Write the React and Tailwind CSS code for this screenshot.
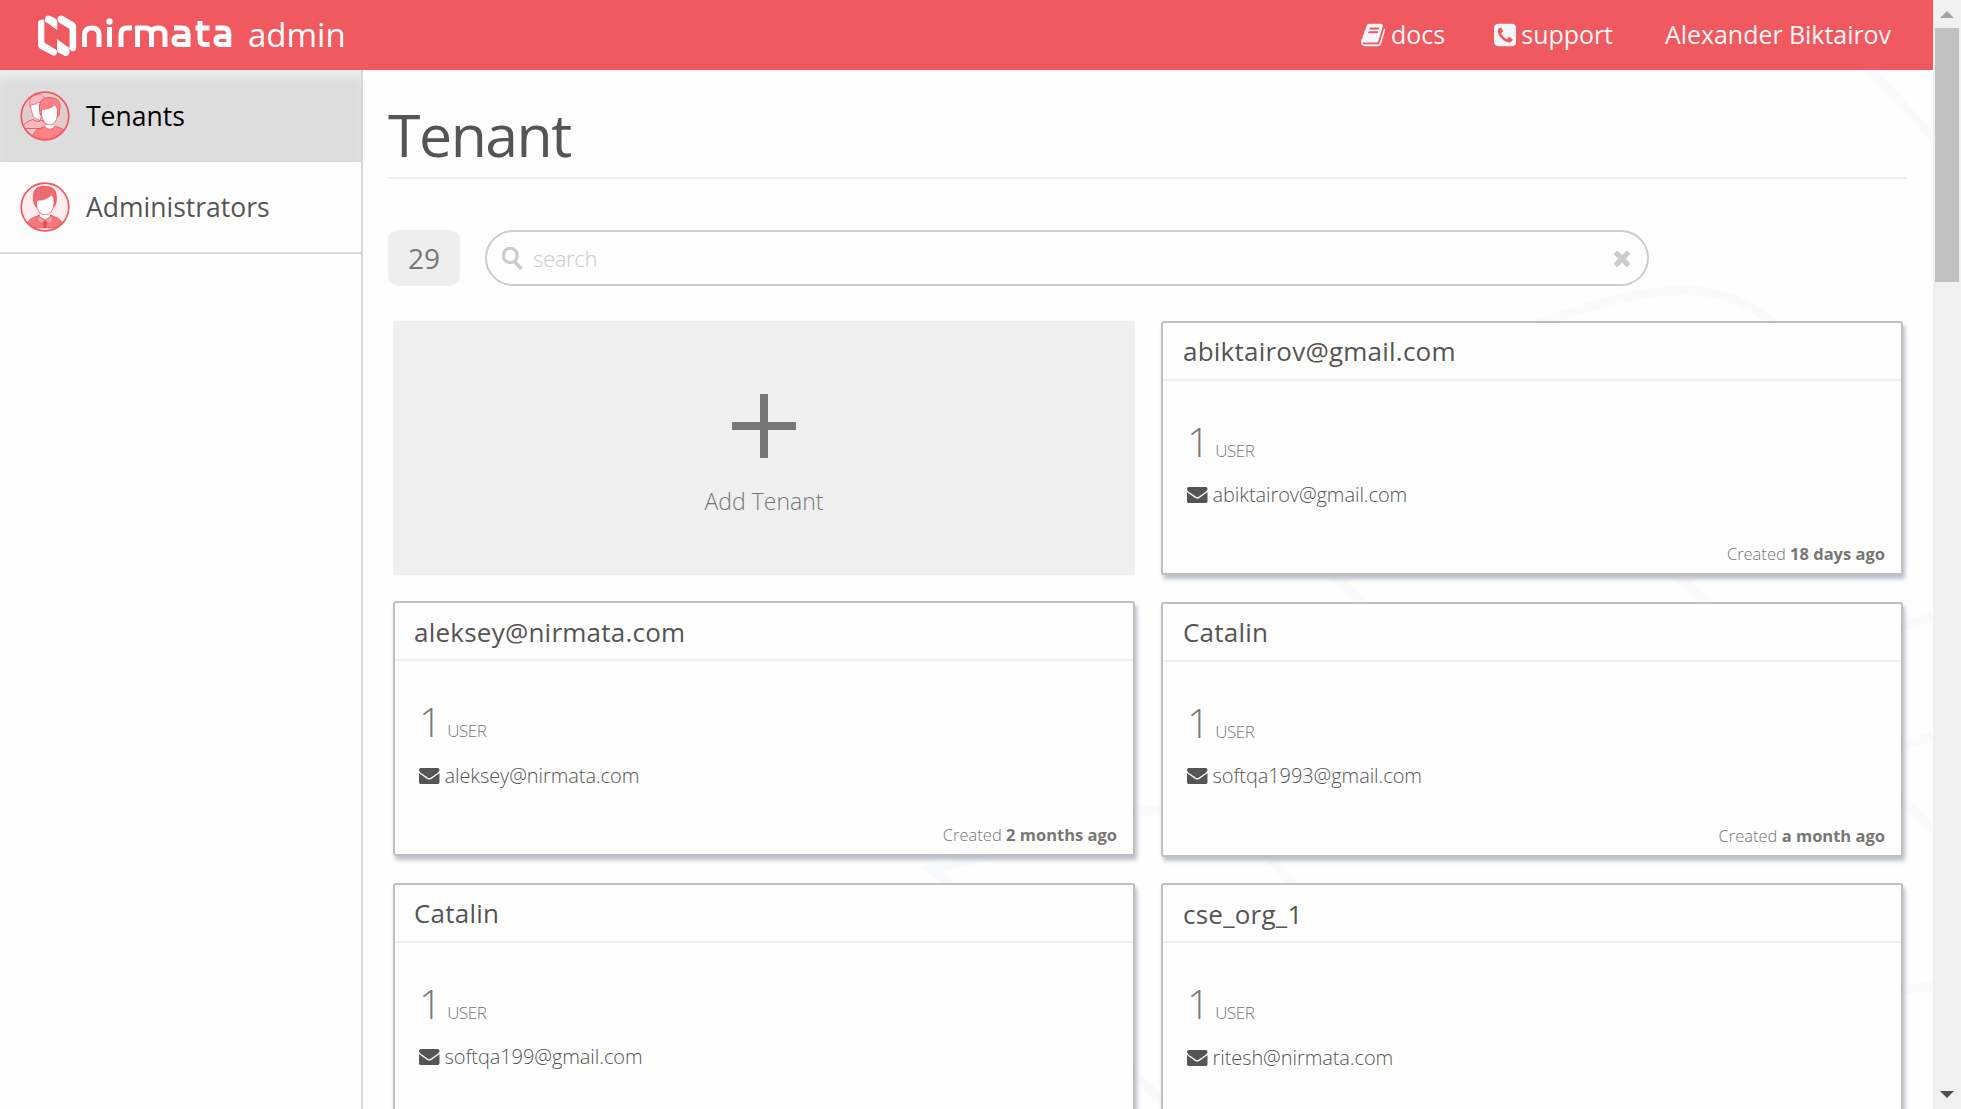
import React from "react";

const cards = [
  { name: "abiktairov@gmail.com", mail: "abiktairov@gmail.com", ago: "18 days ago", frame: "h-[254px]", titlePad: "pl-5 pt-0", mailPad: "pb-[2px]" },
  { name: "aleksey@nirmata.com", mail: "aleksey@nirmata.com", ago: "2 months ago", frame: "-mt-px h-[255px]", titlePad: "pl-[19px] pt-[2px]", mailPad: "pb-0" },
  { name: "Catalin", mail: "softqa1993@gmail.com", ago: "a month ago", frame: "h-[255px]", titlePad: "pl-5 pt-0", mailPad: "pb-[2px]" },
  { name: "Catalin", mail: "softqa199@gmail.com", frame: "-mt-px h-[254px]", titlePad: "pl-[19px] pt-0", mailPad: "pb-[2px]" },
  { name: "cse_org_1", mail: "ritesh@nirmata.com", frame: "-mt-px h-[254px]", titlePad: "pl-5 pt-[2px]", mailPad: "pb-0" },
];

function BookIcon() {
  return (
    <svg width="26" height="26" viewBox="0 0 1792 1792" fill="currentColor">
      <path d="M1639 478q40 57 18 129l-275 906q-19 64-76.500 107.500t-122.500 43.500h-923q-77 0-148.500-53.500t-99.500-131.500q-24-67-2-127 0-4 3-27t4-37q1-8-3-21.500t-3-19.500q2-11 8-21t16.500-23.500 16.500-23.500q23-38 45-91.500t30-91.500q3-10 .5-30t-.5-28q3-11 17-28t17-23q21-36 42-92t25-90q1-9-2.500-32t.5-28q4-13 22-30.500t22-22.500q19-26 42.500-84.500t27.500-96.500q1-8-3-25.500t-2-26.500q2-8 9-18t18-23 17-21q8-12 16.500-30.500t15-35 16-36 19.500-32 26.500-23.500 36-11.500 47.500 5.500l-1 3q38-9 51-9h761q74 0 114 56t18 130l-274 906q-36 119-71.500 153.500t-128.500 34.500h-869q-27 0-38 15-11 16-1 43 24 70 144 70h923q29 0 56-15.500t35-41.500l300-987q7-22 5-57 38 15 59 43zm-1064 2q-4 13 2 22.500t20 9.500h608q13 0 25.500-9.500t16.500-22.500l21-64q4-13-2-22.500t-20-9.500h-608q-13 0-25.500 9.500t-16.500 22.500zm-83 256q-4 13 2 22.500t20 9.500h608q13 0 25.500-9.500t16.500-22.500l21-64q4-13-2-22.500t-20-9.500h-608q-13 0-25.500 9.500t-16.500 22.500z" />
    </svg>
  );
}

function PhoneIcon() {
  return (
    <svg width="22.300" height="26" viewBox="0 0 1536 1792" fill="currentColor">
      <path d="M1280 1193q0-11-2-16-3-8-38.500-29.500t-88.500-49.500l-53-29q-5-3-19-13t-25-15-21-5q-18 0-47 32.500t-57 65.500-44 33q-7 0-16.500-3.500t-15.500-6.500-17-9.500-14-8.500q-99-55-170.500-126.500t-126.500-170.500q-2-3-8.500-14t-9.500-17-6.500-15.500-3.500-16.500q0-13 20.500-33.500t45-38.500 45-39.500 20.500-36.500q0-10-5-21t-15-25-13-19q-3-6-15-28.500t-25-45.500-26.500-47.500-25-40.500-16.500-18-16-2q-48 0-101 22-46 21-80 94.500t-34 130.500q0 16 2.500 34t5 30.500 9 33 10 29.500 12.500 33 11 30q60 164 216.500 320.500t320.500 216.500q6 2 30 11t33 12.500 29.500 10 33 9 30.500 5 34 2.500q57 0 130.500-34t94.500-80q22-53 22-101zM1536 416v960q0 119-84.500 203.500t-203.500 84.500h-960q-119 0-203.500-84.500t-84.500-203.500v-960q0-119 84.500-203.500t203.500-84.500h960q119 0 203.500 84.500t84.500 203.500z" />
    </svg>
  );
}

function EnvelopeIcon() {
  return (
    <svg className="mb-px" width="20.500" height="20.500" viewBox="0 0 1792 1792" fill="currentColor">
      <path d="M1792 710v794q0 66-47 113t-113 47h-1472q-66 0-113-47t-47-113v-794q44 49 101 87 362 246 497 345 57 42 92.500 65.500t94.500 48 110 24.500h2q51 0 110-24.500t94.500-48 92.500-65.500q170-123 498-345 57-39 100-87zm0-294q0 79-49 151t-122 123q-376 261-468 325-10 7-42.500 31t-54 38.500-52 32.500-57.500 27-50 9h-2q-23 0-50-9t-57.500-27-52-32.500-54-38.500-42.500-31q-91-64-262-182.500t-205-142.500q-62-42-117-115.500t-55-136.500q0-78 41.500-130t118.500-52h1472q65 0 112.500 47t47.500 113z" />
    </svg>
  );
}

function ClearIcon() {
  return (
    <svg className="ml-auto" width="24" height="24" viewBox="0 0 1792 1792" fill="currentColor">
      <path d="M1490 1322q0 40-28 68l-136 136q-28 28-68 28t-68-28l-294-294-294 294q-28 28-68 28t-68-28l-136-136q-28-28-28-68t28-68l294-294-294-294q-28-28-28-68t28-68l136-136q28-28 68-28t68 28l294 294 294-294q28-28 68-28t68 28l136 136q28 28 28 68t-28 68l-294 294 294 294q28 28 28 68z" />
    </svg>
  );
}

function Logo() {
  return (
    <svg width="196" height="44" viewBox="0 0 196 44" fill="none" className="mt-[3px] shrink-0">
      <g fill="#fff">
        <path d="M0 8Q0 5.500 2 5L5 4.500Q6.300 4.500 6.300 6V27.500L17.500 34.200Q19.300 35.500 19 38Q18 41.500 15 40.500L2 33.800Q0 32.500 0 30Z" />
        <path d="M7 3.500Q8-.5 12 .8L17.500 3.500Q19.500 5 19.300 8V13L7 6.500Z" />
        <path d="M19.500 3Q21-.8 25 1L36 7.500Q38.200 9 38.200 12.500V33Q38 36 35 36.300Q31.800 36 31.600 33V14L21 7.500Q19.500 6 19.500 3Z" />
        <path d="M19 25.500L31.500 33V37.500Q30.500 41.500 27 41L21 38Q19 37 19 34Z" />
        <path d="M7 6.500L19.300 13L19.300 15Z" />
        <path d="M19 24V26L31 33Z" />
      </g>
      <g stroke="#fff" strokeWidth="5">
        <path d="M46.500 32V20Q46.500 13 54 13Q61 13 61 20V32" />
        <path d="M71.500 12V32" />
        <path d="M83 32V19Q83 13 89 13H94" />
        <path d="M99.500 32V13H107Q113.500 13 113.500 19.500V32M113.500 18Q113.500 13 120 13Q127 13 127 19.500V32" />
        <path d="M136 13H144Q150 13 150 19V29.500H140.500Q136 29.500 136 25.500Q136 21.500 140.500 21.500H150" />
        <path d="M162 6V24.500Q162 29.500 167 29.500H171.500M157.500 13H171.500" />
        <path d="M177.500 13H186Q190.800 13 190.800 19V29.500H182.500Q178 29.500 178 25.500Q178 21.500 182.500 21.500H190.800" />
      </g>
      <circle cx="71.500" cy="6.500" r="3.200" fill="#fff" />
    </svg>
  );
}

function TenantsIcon() {
  return (
    <svg width="50" height="50" viewBox="0 0 50 50" className="shrink-0">
      <defs>
        <clipPath id="tenantsClip"><circle cx="25" cy="25" r="23.500" /></clipPath>
      </defs>
      <g clipPath="url(#tenantsClip)">
        <rect width="50" height="50" fill="#dfcdcd" />
        <path d="M9.500 14Q9 3 19 3Q25 4 26 12L20 18L10 16Z" fill="#ffb9bd" stroke="#ff7b82" />
        <path d="M10.500 14Q16 13.500 19 11L21 13V26L20 29.500Q11 28 10.500 14Z" fill="#fff" stroke="#f0595f" strokeWidth=".8" />
        <path d="M2 37.500Q4 31 13 28.500Q18 32 22 29L26 33V37.500Z" fill="#ffb9bd" stroke="#f0595f" />
        <path d="M20 23Q17 7 28 6.500Q43 6 39.500 20Q39.500 25 37.500 26Q22 28 20 23Z" fill="#ff8087" stroke="#f0595f" />
        <path d="M21.500 18.500Q31 18 35 13.500L37.500 18V24Q36.500 33 29.500 34Q23 33 21.500 24Z" fill="#fff" stroke="#f0595f" strokeWidth=".8" />
        <path d="M12 50Q12 39.500 21 37L25 35.500Q30 40 35 35.500Q45 37 47 44V50Z" fill="#ff8087" stroke="#f0595f" />
        <path d="M25.500 33.500Q30 35.500 34 33.500V36Q30 39.500 25.500 36Z" fill="#fff" />
      </g>
      <circle cx="25" cy="25" r="23.800" fill="none" stroke="#f0595f" strokeWidth="1.700" />
    </svg>
  );
}

function AdminIcon() {
  return (
    <svg width="50" height="50" viewBox="0 0 50 50" className="shrink-0">
      <defs>
        <clipPath id="adminClip"><circle cx="25" cy="25" r="23.500" /></clipPath>
      </defs>
      <g clipPath="url(#adminClip)">
        <rect width="50" height="50" fill="#ffecee" />
        <path d="M14 21Q12 9 17 6Q22 3 29 5Q38 6 36 21L34 25H16Z" fill="#ee6c71" stroke="#f0595f" />
        <path d="M16.500 18.500Q27 18 32 12.500L34 17V22Q33 32 25 33Q17 32 16.500 22Z" fill="#fff" stroke="#f0595f" strokeWidth=".8" />
        <path d="M6 46Q8 36.500 15 35L20 33Q25 38 30 33L35 35Q42 37 44 46Z" fill="#f17a7e" stroke="#f0595f" />
        <path d="M20 32Q25 35 30 32V35L25 38L20 35Z" fill="#fff" />
        <path d="M18 34L25 38L32 34L33 39L28 42L25 38L22 42L17 39Z" fill="#f79a9d" stroke="#f0595f" strokeWidth=".7" />
        <path d="M25 38L27 41L26.500 46H23.500L23 41Z" fill="#e84c53" />
        <path d="M8 46.500H42V50H8Z" fill="#fff" opacity=".7" />
      </g>
      <circle cx="25" cy="25" r="23.800" fill="none" stroke="#f0595f" strokeWidth="1.700" />
    </svg>
  );
}

function Backdrop() {
  return (
    <svg className="pointer-events-none absolute inset-0" width="1570" height="1039" viewBox="363 70 1570 1039" fill="none" stroke="#f9fafc" strokeWidth="9">
      <path d="M1866 66L1937 141" />
      <path d="M1515 330C1580 312 1620 290.500 1685 290.500Q1735 290 1777 326" />
      <path d="M1328 570L1367 608" />
      <path d="M1672 571L1712 608" strokeWidth="10" />
      <path d="M1900 628L1935 616M1900 746L1935 736M1900 798L1935 831" />
      <path d="M1130 812L1165 810" />
      <path d="M1000 854L930 869L952 886" />
      <path d="M1263 850L1298 890" />
      <path d="M1132 1072L1165 1103" />
      <path d="M1900 990L1935 986" />
    </svg>
  );
}

function TenantCard({ name, mail, ago, frame, titlePad, mailPad }) {
  return (
    <article className={`${frame} flex flex-col rounded-[3px] border-2 border-[#bfbfbf] bg-[#fefefe] shadow-[2px_4px_4px_#b8bfcc]`}>
      <h2 className={`${titlePad} flex h-[58px] shrink-0 items-center border-b-2 border-[#eee] text-[26px] tracking-[0.23px] text-[#555]`}>{name}</h2>
      <div className="flex h-[90px] shrink-0 items-baseline pl-6 pt-[34px] font-light text-[#777]">
        <span className="text-[40px] leading-[54px]">1</span>
        <span className="ml-[5.5px] text-[17px] tracking-[-0.5px]">USER</span>
      </div>
      <div className={`${mailPad} flex h-[50px] items-center gap-[5px] pl-6 text-[20px] font-light tracking-[-0.08px] text-[#555]`}>
        <EnvelopeIcon />
        <span>{mail}</span>
      </div>
      {ago && (
        <p className="mt-auto pr-4 pb-[6px] text-right text-[16.5px] leading-[26px] font-light text-[#777]">
          Created <b className="font-bold">{ago}</b>
        </p>
      )}
    </article>
  );
}

export default function App() {
  return (
    <div className="flex h-[1109px] w-[1961px] overflow-hidden bg-[#fefefe] font-['Open_Sans',sans-serif]">
      <div className="flex w-[1933px] shrink-0 flex-col">
        <header className="flex h-[70px] shrink-0 items-center bg-[#f0595f] text-[#f6f6f6]">
          <div className="flex items-center pl-[38px]">
            <Logo />
            <span className="ml-[14px] text-[33px] leading-[70px] text-white">admin</span>
          </div>
          <nav className="ml-auto flex items-center pr-[42px] text-[25px] tracking-[-0.05px]">
            <a className="mr-[49px] flex items-center gap-[4px]"><BookIcon />docs</a>
            <a className="mr-[52px] flex items-center gap-[5px]"><PhoneIcon />support</a>
            <span>Alexander Biktairov</span>
          </nav>
        </header>
        <div className="flex min-h-0 flex-1">
          <aside className="w-[363px] shrink-0 border-r-2 border-[#d8d8d8] text-[26.5px]">
            <div className="flex h-[92px] items-center gap-[16.5px] border-b border-[#d5d5d5] bg-[#ddd] pl-[19.5px] text-black shadow-[inset_0_12px_12px_-6px_#f0f0f0]">
              <TenantsIcon /><span className="pt-[2px]">Tenants</span>
            </div>
            <div className="flex h-[92px] items-center gap-[16.5px] border-b-2 border-[#d8d8d8] pl-[19.5px] text-[#555]">
              <AdminIcon /><span className="pt-[2px]">Administrators</span>
            </div>
          </aside>
          <main className="relative w-[1570px] shrink-0 overflow-hidden pl-[25px]">
            <Backdrop />
            <div className="relative">
              <h1 className="flex h-[109px] w-[1519px] items-end border-b-2 border-[#eee] pb-[3px] text-[59px] leading-[80px] tracking-[-1.5px] text-[#555]">Tenant</h1>
              <div className="mt-[51px] flex h-14">
                <div className="flex w-[72px] items-center justify-center rounded-[10px] bg-[#eee] text-[28px] text-[#777]">29</div>
                <label className="ml-[25px] flex w-[1164px] items-center rounded-full border-2 border-[#ccc] bg-[#fefefe] pl-[15px] pr-[13px] text-[22px] font-light tracking-[-0.3px] text-[#ccc]">
                  <svg className="mt-0.5" width="22" height="24" viewBox="0 0 22 24" fill="none" stroke="#ccc"><rect x="1.500" y="1.500" width="13.500" height="14" rx="6" strokeWidth="3.200" /><path d="M13 15L19.500 22" strokeWidth="3.800" /></svg>
                  <span className="ml-[9px]">search</span>
                  <ClearIcon />
                </label>
              </div>
              <div className="mt-[35px] ml-[5px] grid w-[1510px] grid-cols-[742px_742px] items-start gap-x-[26px] gap-y-[27px]">
                <button className="flex h-[254px] flex-col items-center rounded-[3px] bg-[#efefef] text-[#777]">
                  <svg className="mt-[73px]" width="64" height="64" viewBox="0 0 64 64" stroke="#777" strokeWidth="8"><path d="M32 0V64M0 32H64" /></svg>
                  <span className="mt-[27px] text-[23px] leading-[33px] font-light">Add Tenant</span>
                </button>
                {cards.map((card) => <TenantCard key={card.mail} {...card} />)}
              </div>
            </div>
          </main>
        </div>
      </div>
      <div className="flex w-7 shrink-0 flex-col items-center bg-[#f0f0f0]">
        <svg width="28" height="28" viewBox="0 0 28 28"><path d="M7 18H21L14 11Z" fill="#a3a3a3" /></svg>
        <div className="h-[254px] w-6 bg-[#c1c1c1]" />
        <svg className="mt-auto" width="28" height="28" viewBox="0 0 28 28"><path d="M7 10H21L14 17Z" fill="#505050" /></svg>
      </div>
    </div>
  );
}
